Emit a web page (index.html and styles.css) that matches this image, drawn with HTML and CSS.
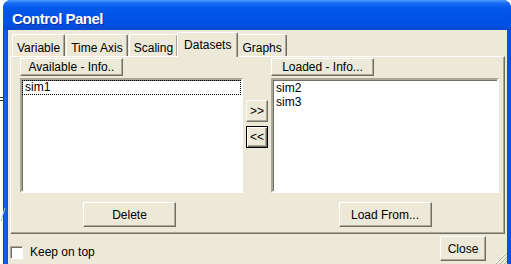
FILE: index.html
```html
<!DOCTYPE html>
<html lang="en">
<head>
    <meta charset="UTF-8">
    <meta name="viewport" content="width=device-width, initial-scale=1.0">
    <title>Control Panel</title>

    <link rel="stylesheet" href="styles.css">
</head>
<body>
    <div class="window">
        <div class="titlebar">
            <span class="title">Control Panel</span>
        </div>
        <div class="client">
            <div class="tabs">
                <div class="tab">Variable</div>
                <div class="tab">Time Axis</div>
                <div class="tab">Scaling</div>
                <div class="tab active">Datasets</div>
                <div class="tab">Graphs</div>
            </div>
            <div class="panel">
                <div class="datasets">
                    <button class="btn head">Available - Info..</button>
                    <div></div>
                    <button class="btn head">Loaded - Info...</button>

                    <div class="list">
                        <div class="item focus">sim1</div>
                    </div>
                    <div class="move">
                        <button class="btn small">&gt;&gt;</button>
                        <button class="btn small default">&lt;&lt;</button>
                    </div>
                    <div class="list loaded">
                        <div class="item">sim2</div>
                        <div class="item">sim3</div>
                    </div>

                    <div class="cell left"><button class="btn wide">Delete</button></div>
                    <div></div>
                    <div class="cell"><button class="btn wide">Load From...</button></div>
                </div>
            </div>
            <div class="footer">
                <label class="keep"><span class="check"></span>Keep on top</label>
                <button class="btn close">Close</button>
                <svg class="grip" width="12" height="12" viewBox="0 0 12 12">
                    <path d="M11 1 L1 11 M11 5 L5 11 M11 9 L9 11" stroke="#fff" stroke-width="1"/>
                    <path d="M12 1 L1 12 M12 5 L5 12 M12 9 L9 12" stroke="#ACA899" stroke-width="1"/>
                </svg>
            </div>
        </div>
    </div>

    <!-- bits of the page behind the window -->
    <svg class="behind" width="8" height="140" viewBox="0 0 8 140">
        <path d="M0 7.5 H3 M0 10.5 H3" stroke="#333" stroke-width="1"/>
        <path d="M1 131 L5 118" stroke="#9cc0f0" stroke-width="1"/>
    </svg>
</body>
</html>
```

FILE: styles.css
```css
/* General Reset */
* {
    margin: 0;
    padding: 0;
    box-sizing: border-box;
}

body {
    font-family: "Liberation Sans", Arial, sans-serif;
    font-size: 12px;
    color: #000;
    background-color: #fff;
    overflow: hidden;
}

/* Window frame */
.window {
    margin-left: 3px;
    width: 508px;
    height: 264px;
    display: flex;
    flex-direction: column;
    background: linear-gradient(to right, #0A3CC8 0, #1A62F2 2px, #0B50E4 5px);
    border-radius: 8px 8px 0 0;
    overflow: hidden;
}

.titlebar {
    flex: none;
    height: 30px;
    padding: 10px 0 0 9px;
    background: linear-gradient(to bottom, #4D9CFF 0, #1A6CF6 3px, #0458EA 8px, #0053E5 18px, #0051E2 25px, #0947CF 30px);
}

.title {
    color: #fff;
    font-size: 15px;
    font-weight: bold;
    letter-spacing: -0.5px;
    line-height: 17px;
    text-shadow: 1px 1px #0A2A9E;
}

.client {
    flex: 1;
    margin: 0 4px 0 5px;
    display: flex;
    flex-direction: column;
    background-color: #ECE9D8;
}

/* Tabs */
.tabs {
    flex: none;
    height: 26px;
    display: flex;
    align-items: flex-end;
    padding-left: 4px;
}

.tab {
    height: 22px;
    padding: 6px 4px 0;
    margin-right: 1px;
    line-height: 14px;
    border: 1px solid;
    border-bottom: none;
    border-color: #fff #716F64 #716F64 #fff;
    border-radius: 2px 2px 0 0;
    box-shadow: inset -1px 0 #ACA899;
}

.tab.active {
    position: relative;
    z-index: 1;
    height: 25px;
    padding: 5px 6px 0;
    margin: 0 -1px -1px -2px;
    background-color: #ECE9D8;
}

.panel {
    height: 178px;
    margin: 0 2px;
    padding: 1px 5px 0 9px;
    border: 1px solid;
    border-color: #fff #716F64 #716F64 #fff;
    box-shadow: inset -1px -1px #ACA899;
}

/* Datasets page */
.datasets {
    display: grid;
    grid-template-columns: 223px 28px 228px;
    grid-template-rows: 18px 115px auto;
    row-gap: 2px;
}

.btn {
    font: inherit;
    color: #000;
    background-color: #ECE9D8;
    border: 1px solid;
    border-color: #fff #716F64 #716F64 #fff;
    box-shadow: inset -1px -1px #ACA899;
}

.head {
    width: 103px;
    height: 18px;
}

.list {
    background-color: #fff;
    border: 2px solid;
    border-color: #ACA899 #fff #fff #ACA899;
    box-shadow: inset 1px 1px #716F64;
}

.list.loaded {
    padding-top: 1px;
}

.item {
    padding: 0 2px 0 3px;
    line-height: 14px;
}

.item.focus {
    border: 1px dotted #000;
    padding-left: 2px;
    line-height: 13px;
}

.move {
    display: flex;
    flex-direction: column;
    gap: 4px;
    padding: 22px 0 0 3px;
}

.small {
    width: 22px;
    height: 22px;
    font-size: 12px;
    line-height: 1;
}

.small.default {
    border-color: #000;
    box-shadow: inset 1px 1px #fff, inset -1px -1px #716F64, inset -2px -2px #ACA899;
}

.cell {
    display: flex;
    justify-content: center;
    padding-top: 7px;
}

.cell.left {
    padding-right: 4px;
}

.wide {
    width: 93px;
    height: 25px;
}

/* Bottom row */
.footer {
    flex: 1;
    display: flex;
    align-items: flex-start;
    padding-left: 2px;
}

.keep {
    display: flex;
    align-items: center;
    gap: 7px;
    margin-top: 11px;
}

.check {
    width: 13px;
    height: 13px;
    background-color: #fff;
    border: 1px solid;
    border-color: #ACA899 #fff #fff #ACA899;
    box-shadow: inset 1px 1px #716F64;
}

.close {
    width: 46px;
    height: 25px;
    margin: 2px 0 0 auto;
}

.grip {
    margin: auto 0 0 9px;
}

.behind {
    position: absolute;
    left: 0;
    top: 90px;
}
```
